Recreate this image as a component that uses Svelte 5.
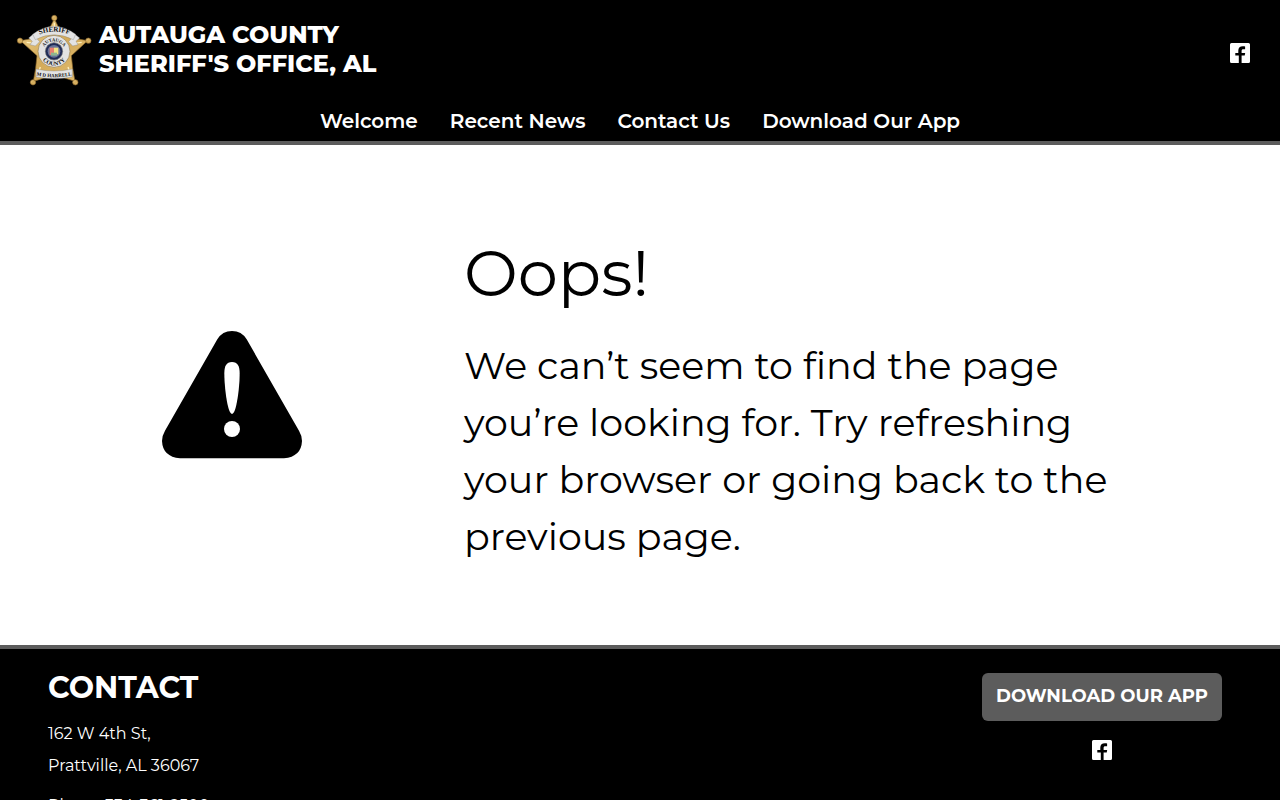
<script lang="ts">
  const agency = ["AUTAUGA COUNTY", "SHERIFF'S OFFICE, AL"];

  const navItems = [
    { label: "Welcome", href: "#welcome" },
    { label: "Recent News", href: "#news" },
    { label: "Contact Us", href: "#contact" },
    { label: "Download Our App", href: "#app-download" },
  ];

  const address = ["162 W 4th St,", "Prattville, AL 36067"];
  const phone = "334-361-2500";
</script>

{#snippet facebook()}
  <a class="social" href="#facebook" aria-label="Facebook">
    <svg viewBox="0 0 20 20" aria-hidden="true">
      <path
        fill="currentColor"
        d="M1.5 0h17A1.5 1.5 0 0 1 20 1.5v17a1.5 1.5 0 0 1-1.500 1.500h-6.900v-7.500h3.100l.5-2.600h-3.600V8.100c0-1.300.5-1.900 1.700-1.900h1.800V3.500c-.6-.1-1.500-.2-2.200-.2-2.900 0-4.600 1.500-4.600 4.400v2.200H5.300v2.600h3.500V20H1.500A1.500 1.500 0 0 1 0 18.500v-17A1.500 1.500 0 0 1 1.500 0z"
      />
    </svg>
  </a>
{/snippet}

<header class="site-header">
  <div class="brand-row">
    <a class="brand" href="#home">
      <svg class="badge" viewBox="18 12 228 216" aria-hidden="true">
        <defs>
          <linearGradient id="gold" x1="0" y1="0" x2="1" y2="1">
            <stop offset="0" stop-color="#f0d491" />
            <stop offset="0.5" stop-color="#d3aa59" />
            <stop offset="1" stop-color="#e2be72" />
          </linearGradient>
          <path id="arc-sheriff" d="M74 80Q132 50 193 80" />
          <path id="arc-top" d="M98 128A34 34 0 0 1 166 128" />
          <path id="arc-bottom" d="M89 124A43 43 0 0 0 175 124" />
          <path id="arc-name" d="M78 196Q132 207 187 196" />
        </defs>
        <g fill="url(#gold)" stroke="#8a6528" stroke-width="2">
          <path d="M133 26L157 75Q195 87 233 92L184 137Q187 176 195 214Q164 207 133 189Q101 207 70 214Q78 176 81 137L31 92Q70 87 109 75Z" />
          <circle cx="133" cy="24" r="8" />
          <circle cx="30" cy="92" r="8" />
          <circle cx="235" cy="92" r="8" />
          <circle cx="69" cy="217" r="8" />
          <circle cx="196" cy="217" r="8" />
        </g>
        <path
          d="M133 38V70M50 97L82 101M215 97L184 101M81 201L91 171M184 201L174 171"
          stroke="#fff0bd"
          stroke-width="4"
        />
        <g fill="#e3e3e3" stroke="#777" stroke-width="1">
          <path d="M69 73L80 85L89 95L76 108L60 104L67 94L56 84ZM195 73L185 85L176 95L188 108L204 104L198 94L209 84Z" />
          <circle cx="132" cy="124" r="48" stroke="#987c46" stroke-width="2" />
          <path d="M68 73Q132 25 197 73L190 89Q132 60 76 89Z" />
          <path d="M78 177Q132 189 187 177V201Q132 211 78 201Z" />
        </g>
        <circle cx="132" cy="124" r="26" fill="#202b57" stroke="#777" stroke-width="2" />
        <circle cx="132" cy="124" r="19" fill="#687499" />
        <path d="M119 113h13v22h-13z" fill="#e98070" />
        <path d="M132 113h13v20h-13z" fill="#f3e384" />
        <path d="M123 128h18v9h-18z" fill="#8db690" />
        <g class="badge-text" text-anchor="middle">
          <text font-size="21"><textPath href="#arc-sheriff" startOffset="50%">SHERIFF</textPath></text>
          <text font-size="14"><textPath href="#arc-top" startOffset="50%">AUTAUGA</textPath></text>
          <text font-size="18"><textPath href="#arc-bottom" startOffset="50%">COUNTY</textPath></text>
          <text font-size="15"><textPath href="#arc-name" startOffset="50%">M D HARRELL</textPath></text>
        </g>
      </svg>
      <span class="brand-name">
        {#each agency as line}
          <span>{line}</span>
        {/each}
      </span>
    </a>
    {@render facebook()}
  </div>

  <nav aria-label="Main">
    {#each navItems as item}
      <a href={item.href}>{item.label}</a>
    {/each}
  </nav>
</header>

<main>
  <div class="warning">
    <svg viewBox="0 0 420 382" aria-hidden="true">
      <path d="M210 0Q239 0 254 25L411 299Q420 314 420 330Q418 377 366 382H54Q2 377 0 330Q0 314 9 299L166 25Q181 0 210 0Z" />
      <path
        fill="#fff"
        d="M210 93C227 93 233 105 233 127C233 171 223 249 210 249S187 171 187 127C187 105 193 93 210 93Z"
      />
      <circle fill="#fff" cx="210" cy="294" r="24" />
    </svg>
  </div>
  <div class="message">
    <h1>Oops!</h1>
    <p>
      We can’t seem to find the page you’re looking for. Try refreshing your browser or going back
      to the previous page.
    </p>
  </div>
</main>

<footer>
  <section id="contact">
    <h2>CONTACT</h2>
    <address>
      {#each address as line}
        <span>{line}</span>
      {/each}
    </address>
    <p>Phone <a href="tel:{phone}">{phone}</a></p>
  </section>
  <div class="footer-actions">
    <a class="download" href="#app-download">DOWNLOAD OUR APP</a>
    {@render facebook()}
  </div>
</footer>

<style>
  :global(body) {
    background: #fff;
    color: #000;
    font-family: Montserrat, Inter, "Open Sans", sans-serif;
  }
  a {
    color: inherit;
    text-decoration: none;
  }
  h1,
  h2,
  p {
    margin: 0;
  }
  svg {
    display: block;
  }
  .site-header {
    background: #000;
    color: #fff;
    border-bottom: 4px solid #5c5c5c;
  }
  .brand-row {
    display: flex;
    align-items: center;
    justify-content: space-between;
    padding: 14px 30px 14px 16px;
  }
  .brand {
    display: flex;
    gap: 7px;
  }
  .badge {
    width: 76px;
    height: 72px;
  }
  .badge-text {
    font-family: "Liberation Serif", serif;
    font-weight: 700;
    fill: #111;
  }
  .brand-name {
    padding-top: 6px;
    font-size: 24px;
    font-weight: 800;
    line-height: 29px;
  }
  .brand-name span,
  address span {
    display: block;
  }
  .social {
    display: block;
    width: 20px;
    height: 20px;
  }
  .brand-row .social {
    margin-top: 6px;
  }
  nav {
    display: flex;
    flex-wrap: wrap;
    justify-content: center;
    gap: 0 32px;
    padding: 6px 0 5px;
    font-size: 20px;
    font-weight: 600;
    line-height: 30px;
  }
  main {
    display: flex;
    align-items: center;
    gap: 10vw;
    min-height: 500px;
    padding: 0 10vw;
  }
  .warning {
    flex: 0 0 208px;
  }
  .warning svg {
    width: 140px;
    margin: 0 auto;
  }
  .message {
    flex: 1;
  }
  h1 {
    margin-bottom: 16px;
    font-size: 64px;
    font-weight: 400;
    line-height: 96px;
  }
  .message p {
    font-size: 38px;
    line-height: 57px;
  }
  footer {
    display: flex;
    justify-content: space-between;
    padding: 16px 58px 48px 48px;
    background: #000;
    color: #fff;
    border-top: 4px solid #5c5c5c;
    line-height: 32px;
  }
  h2 {
    margin-bottom: 8px;
    font-size: 30px;
    font-weight: 700;
    line-height: 45px;
  }
  address {
    margin-bottom: 8px;
    font-style: normal;
  }
  .footer-actions {
    display: flex;
    flex-direction: column;
    align-items: center;
    gap: 19px;
    padding-top: 8px;
  }
  .download {
    padding: 0 14px 2px;
    background: #5c5c5c;
    border-radius: 6px;
    font-size: 18px;
    font-weight: 700;
    line-height: 46px;
  }
</style>
